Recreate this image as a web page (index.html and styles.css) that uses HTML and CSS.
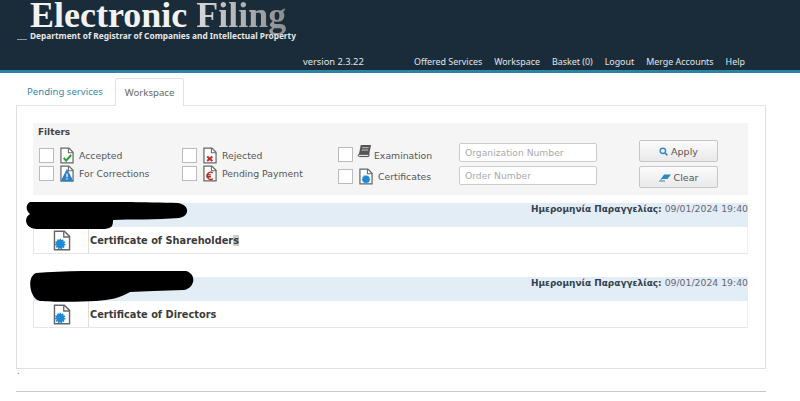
FILE: index.html
```html
<!DOCTYPE html>
<html lang="en">
<head>
    <meta charset="UTF-8">
    <meta name="viewport" content="width=device-width, initial-scale=1.0">
    <title>Electronic Filing</title>
    <link rel="stylesheet" href="styles.css">
</head>
<body>
    <svg class="sprites" width="0" height="0">
        <symbol id="page" viewBox="0 0 15 18">
            <path d="M1 1h8.500L14 5.500V17H1z" fill="#fff" stroke="#666" stroke-width="1.300"/>
            <path d="M9 1v5h5" fill="none" stroke="#666" stroke-width="1.100"/>
        </symbol>
    </svg>

    <header class="site-header">
        <div class="brand">
            <h1 class="brand-title">Electronic <span class="brand-fade">Filing</span></h1>
            <p class="brand-sub"><span class="brand-dash"></span>Department of Registrar of Companies and Intellectual Property</p>
        </div>
        <div class="header-bar">
            <span class="version">version 2.3.22</span>
            <nav class="main-nav">
                <a href="#">Offered Services</a>
                <a href="#">Workspace</a>
                <a href="#">Basket (0)</a>
                <a href="#">Logout</a>
                <a href="#">Merge Accounts</a>
                <a href="#">Help</a>
            </nav>
        </div>
    </header>

    <div class="tabs">
        <a class="tab" href="#">Pending services</a>
        <a class="tab active" href="#">Workspace</a>
    </div>

    <main class="panel">
        <section class="filters">
            <h2 class="filters-title">Filters</h2>
            <div class="filters-body">
                <div class="filter-col col-one">
                    <label class="filter"><span class="check"></span>
                        <svg class="doc" viewBox="0 0 15 18"><use href="#page"/><path d="M4 11.500l2.500 3L12 8.500" fill="none" stroke="#2f9e3a" stroke-width="2.200"/></svg>
                        Accepted</label>
                    <label class="filter"><span class="check"></span>
                        <svg class="doc" viewBox="0 0 15 18"><use href="#page"/><path d="M7.500 4L14.500 17.500H.5z" fill="#2f7fc4"/><path d="M7.500 9v4M7.500 14v1.500" stroke="#fff" stroke-width="1.300"/></svg>
                        For Corrections</label>
                </div>
                <div class="filter-col col-two">
                    <label class="filter"><span class="check"></span>
                        <svg class="doc" viewBox="0 0 15 18"><use href="#page"/><path d="M4.500 10l5.500 5M10 10l-5.500 5" stroke="#c22b2b" stroke-width="2.200"/></svg>
                        Rejected</label>
                    <label class="filter"><span class="check"></span>
                        <svg class="doc" viewBox="0 0 15 18"><use href="#page"/><path d="M10.500 8.500a3.500 4 0 1 0 0 6M3.500 10.500h5M3.500 12.500h5" fill="none" stroke="#b3261e" stroke-width="1.500"/></svg>
                        Pending Payment</label>
                </div>
                <div class="filter-col col-three">
                    <label class="filter"><span class="check"></span>
                        <svg class="doc book" viewBox="0 0 16 15"><path d="M4 1h11l-2 10H2z" fill="#555"/><path d="M2 11h11l-.5 2.500H2.500a1.300 1.300 0 0 1-.5-2.500z" fill="#ddd" stroke="#444"/><path d="M5.500 4h7M5 6.500h7" stroke="#ccc"/></svg>
                        <span class="exam-label">Examination</span></label>
                    <label class="filter"><span class="check"></span>
                        <svg class="doc" viewBox="0 0 15 18"><use href="#page"/><circle cx="7.500" cy="12" r="3.600" fill="#1c8ad6" stroke="#1c8ad6" stroke-width="1.800" stroke-dasharray="1.200 .8"/></svg>
                        Certificates</label>
                </div>
                <div class="filter-inputs">
                    <input class="text-field" type="text" placeholder="Organization Number">
                    <input class="text-field" type="text" placeholder="Order Number">
                </div>
                <div class="filter-buttons">
                    <button class="btn" type="button">
                        <svg class="btn-icon" viewBox="0 0 10 10"><circle cx="4.300" cy="4.300" r="3" fill="none" stroke="#3d88c4" stroke-width="1.600"/><path d="M6.500 6.500L9.300 9.300" stroke="#3d88c4" stroke-width="1.800"/></svg>
                        Apply</button>
                    <button class="btn" type="button">
                        <svg class="btn-icon eraser" viewBox="0 0 12 8"><path d="M5 1h7L8.500 5.500H3.500L1 7z" fill="#2f86c0"/><path d="M0 7.500h6" stroke="#2f86c0"/></svg>
                        Clear</button>
                </div>
            </div>
        </section>

        <article class="order">
            <div class="order-head">
                <svg class="scribble" width="162" height="27" viewBox="0 0 162 27"><path d="M4 0C40-1 110 0 152 1c12 2 12 13 1 15-22 2-50 1-66 2 0 6-1 8-8 9H10C-2 26-2 15 4 12-1 8 0 2 4 0z" fill="#000"/></svg>
                <p class="order-date"><b>Ημερομηνία Παραγγελίας:</b> 09/01/2024 19:40</p>
            </div>
            <div class="order-row">
                <div class="order-icon"><svg class="order-doc" viewBox="0 0 15 18"><use href="#page"/><circle cx="6" cy="12" r="3.600" fill="#1c8ad6" stroke="#1c8ad6" stroke-width="1.800" stroke-dasharray="1.200 .8"/></svg></div>
                <div class="order-name">Certificate of Shareholder<span class="cursor-mark">s</span></div>
            </div>
        </article>

        <article class="order">
            <div class="order-head">
                <svg class="scribble second" width="166" height="31" viewBox="0 0 166 31"><path d="M8 2C50-1 120-1 158 0c11 3 9 17-2 19-22 1-40 1-54 2-10 6-20 8-34 9-16 1-44 1-56 0C2 28-2 6 8 2z" fill="#000"/></svg>
                <p class="order-date"><b>Ημερομηνία Παραγγελίας:</b> 09/01/2024 19:40</p>
            </div>
            <div class="order-row">
                <div class="order-icon"><svg class="order-doc" viewBox="0 0 15 18"><use href="#page"/><circle cx="6" cy="12" r="3.600" fill="#1c8ad6" stroke="#1c8ad6" stroke-width="1.800" stroke-dasharray="1.200 .8"/></svg></div>
                <div class="order-name">Certificate of Directors</div>
            </div>
        </article>
    </main>

    <div class="page-dot">.</div>
    <footer class="page-foot"></footer>
</body>
</html>
```

FILE: styles.css
```css
* {
    box-sizing: border-box;
}
body {
    margin: 0;
    height: 401px;
    overflow: hidden;
    background-color: #fff;
    font-family: "DejaVu Sans", Verdana, sans-serif;
    font-size: 9px;
    color: #444;
}
.sprites {
    position: absolute;
}

/* header */
.site-header {
    height: 73px;
    background-color: #1a2c3a;
    border-bottom: 3px solid #2a84a8;
    font-family: "Noto Sans", Tahoma, sans-serif;
}
.brand {
    height: 53px;
}
.brand-title {
    margin: 0;
    padding-left: 30px;
    font-family: "Liberation Serif", "Times New Roman", serif;
    font-size: 36px;
    line-height: 30px;
    font-weight: bold;
    color: #f2f2f2;
}
.brand-fade {
    background: linear-gradient(90deg, #d8d8d8, #8d8d8d);
    -webkit-background-clip: text;
    background-clip: text;
    color: transparent;
}
.brand-sub {
    display: flex;
    align-items: flex-end;
    margin: 0;
    padding-left: 17px;
    font-size: 8.300px;
    line-height: 11px;
    font-weight: bold;
    color: #e6e6e6;
}
.brand-dash {
    width: 10px;
    height: 1px;
    margin: 0 3px 1px 0;
    background-color: #8a97a0;
}
.header-bar {
    display: flex;
    align-items: center;
    height: 17px;
    padding-left: 303px;
    font-size: 8.900px;
    color: #e2e6e9;
}
.version {
    width: 111px;
    font-size: 9.300px;
}
.main-nav {
    display: flex;
    gap: 12px;
}
.main-nav a {
    color: #e2e6e9;
    text-decoration: none;
}

/* tabs */
.tabs {
    display: flex;
    align-items: flex-end;
    height: 32px;
    padding-left: 17px;
    font-family: "Noto Sans", Tahoma, sans-serif;
    font-size: 9.600px;
}
.tab {
    display: flex;
    align-items: center;
    height: 28px;
    padding: 0 10px;
    color: #3a87ad;
    text-decoration: none;
}
.tab.active {
    position: relative;
    top: 1px;
    margin-left: 2px;
    padding: 0 9px;
    background-color: #fff;
    border: 1px solid #e2e2e2;
    border-bottom: 0;
    border-radius: 3px 3px 0 0;
    color: #666;
}

/* panel */
.panel {
    width: 750px;
    height: 264px;
    margin-left: 16px;
    padding: 17px 17px 0 16px;
    border: 1px solid #dfdfdf;
    border-top-color: #e4e4e4;
}
.filters {
    height: 72px;
    padding: 3px 5px 0;
    background-color: #f5f5f5;
}
.filters-title {
    margin: 0;
    font-size: 8.900px;
    line-height: 13px;
    font-weight: bold;
    color: #444;
}
.filters-body {
    display: flex;
    margin-top: 1px;
}
.filter-col {
    display: flex;
    flex-direction: column;
    gap: 3px;
    padding-top: 8px;
}
.col-one {
    width: 144px;
    padding-left: 1px;
}
.col-two {
    width: 156px;
}
.col-three {
    width: 121px;
    gap: 4px;
    padding-top: 5px;
}
.filter {
    display: flex;
    align-items: center;
    height: 15px;
    color: #555;
    font-size: 9.300px;
}
.col-three .filter {
    height: 18px;
}
.check {
    flex: none;
    width: 15px;
    height: 15px;
    margin-right: 6px;
    background-color: #fff;
    border: 1px solid #bbb;
}
.doc {
    flex: none;
    width: 14px;
    height: 17px;
    margin-right: 5px;
}
.book {
    width: 15px;
    height: 14px;
    margin: -6px 2px 0 -2px;
}
.exam-label {
    margin-top: 2px;
}
.filter-inputs {
    display: flex;
    flex-direction: column;
    gap: 4px;
    width: 180px;
    padding-top: 3px;
}
.text-field {
    width: 138px;
    height: 19px;
    padding: 0 5px;
    border: 1px solid #ccc;
    border-radius: 2px;
    background-color: #fff;
    font-family: inherit;
    font-size: 9.200px;
}
.text-field::placeholder {
    color: #aaa;
}
.filter-buttons {
    display: flex;
    flex-direction: column;
    gap: 4px;
}
.btn {
    display: flex;
    align-items: center;
    justify-content: center;
    gap: 3px;
    width: 79px;
    height: 22px;
    padding: 0;
    background: linear-gradient(#fbfbfb, #e9e9e9);
    border: 1px solid #c6c6c6;
    border-radius: 2px;
    font-family: inherit;
    font-size: 9.500px;
    color: #555;
}
.btn-icon {
    width: 9px;
    height: 9px;
}
.eraser {
    width: 12px;
}

/* orders */
.order {
    margin-top: 8px;
}
.order + .order {
    margin-top: 23px;
}
.order-head {
    position: relative;
    height: 24px;
    background-color: #e3edf5;
}
.order-date {
    margin: 0;
    text-align: right;
    font-size: 9.300px;
    line-height: 12px;
    color: #667;
}
.order-date b {
    font-size: 8.950px;
    color: #33424f;
}
.scribble {
    position: absolute;
    left: -7px;
    top: -1px;
}
.scribble.second {
    left: -5px;
    top: -6px;
}
.order-row {
    display: flex;
    height: 27px;
    border-left: 1px solid #e6e6e6;
    border-right: 1px solid #f0f0f0;
    border-bottom: 1px solid #e6e6e6;
}
.order-icon {
    display: flex;
    align-items: center;
    justify-content: center;
    width: 55px;
    padding-left: 1px;
    border-right: 1px solid #ddd;
}
.order-doc {
    width: 18px;
    height: 21px;
}
.order-name {
    display: flex;
    align-items: center;
    padding-left: 1px;
    font-size: 9.800px;
    font-weight: bold;
    color: #3b3b3b;
}
.cursor-mark {
    background-color: #ccc;
}

/* bottom */
.page-dot {
    height: 22px;
    padding-left: 17px;
    font-size: 8px;
    line-height: 6px;
    color: #555;
}
.page-foot {
    width: 750px;
    margin-left: 16px;
    border-top: 1px solid #c8c8c8;
}
```
